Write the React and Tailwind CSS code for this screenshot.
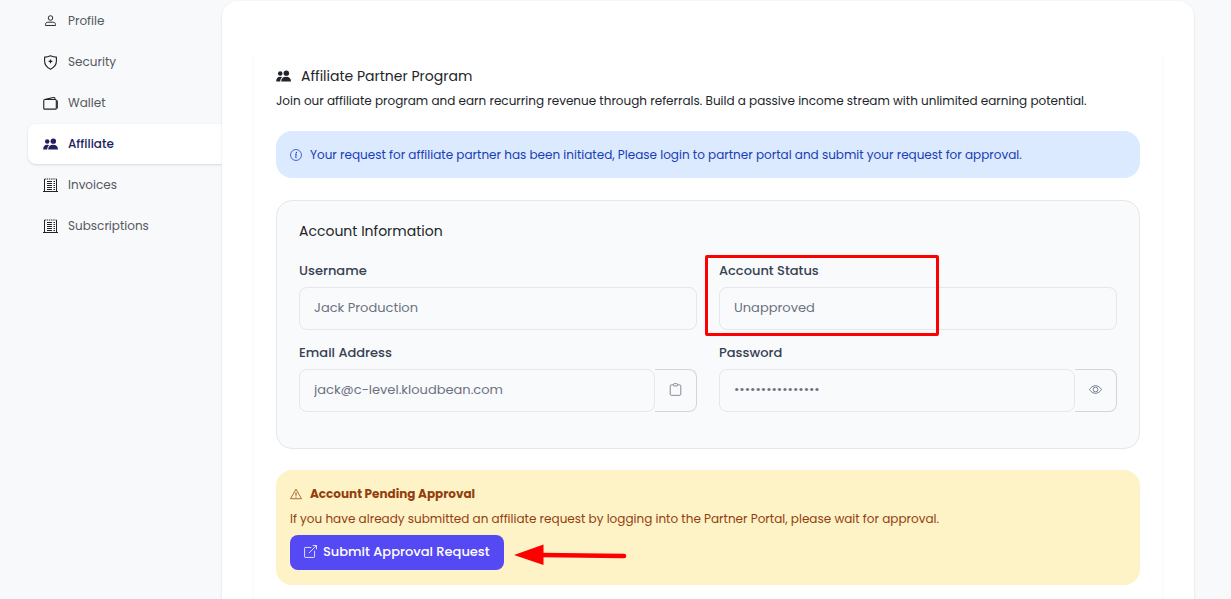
import React, { useState } from 'react';
import clsx from 'clsx';

const Svg = ({ size = 16, className, children, ...rest }) => (
    <svg
        width={size}
        height={size}
        viewBox="0 0 16 16"
        fill="none"
        stroke="currentColor"
        className={clsx('shrink-0', className)}
        aria-hidden="true"
        {...rest}
    >
        {children}
    </svg>
);

const ProfileIcon = (props) => (
    <Svg {...props}>
        <circle cx="8" cy="3.700" r="2.800" strokeWidth="1.200" />
        <path d="M1.800 12.900v-1.200c0-1.700 1.200-2.800 2.900-2.800h6.600c1.700 0 2.900 1.100 2.900 2.800v1.200z" strokeWidth="1.200" strokeLinejoin="round" />
    </Svg>
);

const ShieldIcon = (props) => (
    <Svg {...props}>
        <path d="M8 .9c-1.800.8-3.900 1.300-6.300 1.300v4.300c0 3.900 2.600 7 6.300 8.700 3.700-1.700 6.300-4.800 6.300-8.700V2.200C11.900 2.200 9.800 1.700 8 .9z" strokeWidth="1.200" strokeLinejoin="round" />
        <path d="M8 4.900v4M6 6.900h4" strokeWidth="1.300" />
    </Svg>
);

const WalletIcon = (props) => (
    <Svg {...props}>
        <rect x=".8" y="3.700" width="13.400" height="10.300" rx="1" strokeWidth="1.200" />
        <path d="M2.500 3.600 11 1.700c1.100-.2 1.700.300 1.800 1.100l.1.900M15.300 4.800v8.600" strokeWidth="1.100" />
    </Svg>
);

const PeopleIcon = (props) => (
    <Svg {...props}>
        <g fill="currentColor" stroke="none">
            <circle cx="4.500" cy="4.800" r="2.400" />
            <circle cx="11" cy="4.400" r="2.900" />
            <path d="M.2 13.200c0-3.200 1.600-5 4.300-5 .9 0 1.600.2 2.200.6-1.500 1.100-2.100 2.500-2.200 4.400z" />
            <path d="M5.500 13.200c0-3.300 2.100-5 5.300-5s5.200 1.700 5.200 5z" />
        </g>
    </Svg>
);

const InvoiceIcon = (props) => (
    <Svg {...props} viewBox="0 0 15 15">
        <path d="M1.500 13.500V1M13.500 1v12.500M0 13.500h15" />
        <path d="M1.500 1h12" strokeDasharray="1.400 .8" />
        <path d="M4 3.500h5M4 5.500h5M4 7.500h5M4 9.500h5M4 11.500h5" />
        <path d="M10.500 3.500H12M10.500 5.500H12M10.500 7.500H12M10.500 9.500H12M10.500 11.500H12" />
    </Svg>
);

const InfoIcon = (props) => (
    <Svg {...props}>
        <circle cx="8" cy="8" r="7.300" />
        <path d="M6.700 6.800h1.700l-.9 4.300c-.1.600.3.800 1.300.5" strokeWidth="1.200" />
        <circle cx="8.600" cy="4.600" r=".9" fill="currentColor" stroke="none" />
    </Svg>
);

const ClipboardIcon = (props) => (
    <Svg {...props}>
        <path d="M5 2.300H2.800c-.8 0-1.300.5-1.300 1.300v10.300c0 .8.5 1.300 1.300 1.300h10.400c.8 0 1.300-.5 1.300-1.300V3.600c0-.8-.5-1.300-1.300-1.300H11" />
        <rect x="5.500" y=".8" width="5" height="2.900" rx="1" />
    </Svg>
);

const EyeIcon = (props) => (
    <Svg {...props}>
        <path d="M.7 8S3.300 3.200 8 3.200 15.300 8 15.300 8 12.700 12.800 8 12.800.7 8 .7 8z" strokeWidth="1.100" />
        <circle cx="8" cy="8" r="2.900" strokeWidth="1.100" />
    </Svg>
);

const WarningIcon = (props) => (
    <Svg {...props}>
        <path d="M8 1.500 15.300 14.300H.7z" strokeLinejoin="round" />
        <path d="M8 5.800v4.400" strokeWidth="1.300" />
        <circle cx="8" cy="12" r=".8" fill="currentColor" stroke="none" />
    </Svg>
);

const ExternalIcon = (props) => (
    <Svg {...props}>
        <path d="M9 3H1.500C1 3 .7 3.300.7 3.800v10.700c0 .5.300.800.800.800h10.700c.5 0 .800-.300.800-.800V7" />
        <path d="M10.700.700h4.700v4.700M15.300.700 6 10" />
    </Svg>
);

const navItems = [
    { label: 'Profile', icon: ProfileIcon, size: 13 },
    { label: 'Security', icon: ShieldIcon, size: 15 },
    { label: 'Wallet', icon: WalletIcon, size: 15 },
    { label: 'Affiliate', icon: PeopleIcon, size: 15 },
    { label: 'Invoices', icon: InvoiceIcon, size: 15 },
    { label: 'Subscriptions', icon: InvoiceIcon, size: 15 },
];

function Field({ id, label, type = 'text', value, action, children }) {
    return (
        <div className="relative">
            <label htmlFor={id} className="block mb-1.5 text-[13px] leading-5 font-medium text-gray-700">
                {label}
            </label>
            <div className="flex">
                <input
                    id={id}
                    type={type}
                    value={value}
                    readOnly
                    className={clsx(
                        'min-w-0 flex-1 h-[43px] px-3.5 pb-0.5 rounded-lg border border-gray-200 bg-transparent text-[13px] text-gray-500 outline-none',
                        action && 'relative z-10'
                    )}
                />
                {action}
            </div>
            {children}
        </div>
    );
}

function AddonButton({ label, onClick, children }) {
    return (
        <button
            type="button"
            aria-label={label}
            onClick={onClick}
            className="flex h-[43px] w-[42px] items-center justify-center rounded-r-lg border border-l-0 border-gray-300 pb-0.5 text-gray-500"
        >
            {children}
        </button>
    );
}

export default function App() {
    const [active, setActive] = useState('Affiliate');
    const [showPassword, setShowPassword] = useState(false);
    const email = 'jack@c-level.kloudbean.com';

    return (
        <div className="flex h-screen overflow-hidden bg-[#f8f9fb] pt-px pr-[37px] font-[Poppins,Inter,sans-serif] text-[#212529]">
            {/* Sidebar */}
            <nav className="flex w-[222px] shrink-0 flex-col gap-px pl-7">
                {navItems.map(({ label, icon: Icon, size }) => (
                    <a
                        key={label}
                        href={`#${label.toLowerCase()}`}
                        onClick={() => setActive(label)}
                        className={clsx(
                            'flex h-10 items-center gap-2.5 rounded-l-lg pl-[15px] text-[12px]',
                            active === label
                                ? 'bg-white font-medium text-[#221f5f] shadow-sm'
                                : 'text-[#55585d]'
                        )}
                    >
                        <span className={clsx('flex w-[15px] justify-center', active !== label && 'text-[#212529]')}>
                            <Icon size={size} />
                        </span>
                        {label}
                    </a>
                ))}
            </nav>

            {/* Content */}
            <main className="relative min-w-0 flex-1 self-start rounded-2xl bg-white px-8 pt-11 pb-8 shadow-sm">
                <section className="rounded-2xl px-[22px] pt-5 pb-10 shadow-[0_2px_3px_rgba(0,0,0,0.06)]">
                    <h1 className="flex items-center gap-2.5 text-[14px] leading-[22px]">
                        <PeopleIcon size={15} />
                        Affiliate Partner Program
                    </h1>
                    <p className="mt-1 text-[12px] leading-5">
                        Join our affiliate program and earn recurring revenue through referrals. Build a passive income stream with unlimited earning potential.
                    </p>

                    <div className="mt-5 flex items-center gap-2 rounded-2xl bg-blue-100 px-3.5 py-[13px] text-[12px] leading-[21px] text-blue-800">
                        <InfoIcon size={12} />
                        Your request for affiliate partner has been initiated, Please login to partner portal and submit your request for approval.
                    </div>

                    {/* Account information */}
                    <div className="mt-[22px] rounded-2xl border border-gray-200 bg-gray-50 px-[22px] pt-5 pb-9">
                        <h2 className="mb-5 text-[14px] leading-5">Account Information</h2>
                        <div className="grid grid-cols-2 gap-x-[22px] gap-y-[13px]">
                            <Field id="username" label="Username" value="Jack Production" />
                            <Field id="status" label="Account Status" value="Unapproved">
                                <div className="pointer-events-none absolute -top-1.5 -left-3.5 h-[81px] w-[234px] rounded-xs border-3 border-[#ff0000]" />
                            </Field>
                            <Field
                                id="email"
                                label="Email Address"
                                value={email}
                                action={
                                    <AddonButton label="Copy email" onClick={() => navigator.clipboard?.writeText(email)}>
                                        <ClipboardIcon size={13} />
                                    </AddonButton>
                                }
                            />
                            <Field
                                id="password"
                                label="Password"
                                type={showPassword ? 'text' : 'password'}
                                value="kb-partner-2024x"
                                action={
                                    <AddonButton label="Toggle password" onClick={() => setShowPassword(!showPassword)}>
                                        <EyeIcon size={13} />
                                    </AddonButton>
                                }
                            />
                        </div>
                    </div>

                    {/* Pending approval */}
                    <div className="mt-[21px] rounded-2xl bg-[#fef2c7] px-3.5 pt-3.5 pb-[15px] text-[12px] leading-5 text-[#923f0e]">
                        <h3 className="flex items-center gap-2 font-bold">
                            <WarningIcon size={12} />
                            Account Pending Approval
                        </h3>
                        <p className="mt-[5px]">
                            If you have already submitted an affiliate request by logging into the Partner Portal, please wait for approval.
                        </p>
                        <div className="mt-1.5 flex items-center gap-2.5">
                            <button
                                type="button"
                                className="flex h-[35px] items-center gap-1.5 rounded-lg bg-[#5549f4] px-3.5 pb-0.5 text-[13px] font-medium text-white"
                            >
                                <ExternalIcon size={13} />
                                Submit Approval Request
                            </button>
                            <svg width="113" height="22" viewBox="0 0 113 22" className="mt-1 shrink-0" aria-hidden="true">
                                <path d="M28 11 110 12" stroke="#ff0000" strokeWidth="4.500" strokeLinecap="round" />
                                <path d="M0 11 29.500.500v20.500z" fill="#ff0000" />
                            </svg>
                        </div>
                    </div>
                </section>
            </main>
        </div>
    );
}
